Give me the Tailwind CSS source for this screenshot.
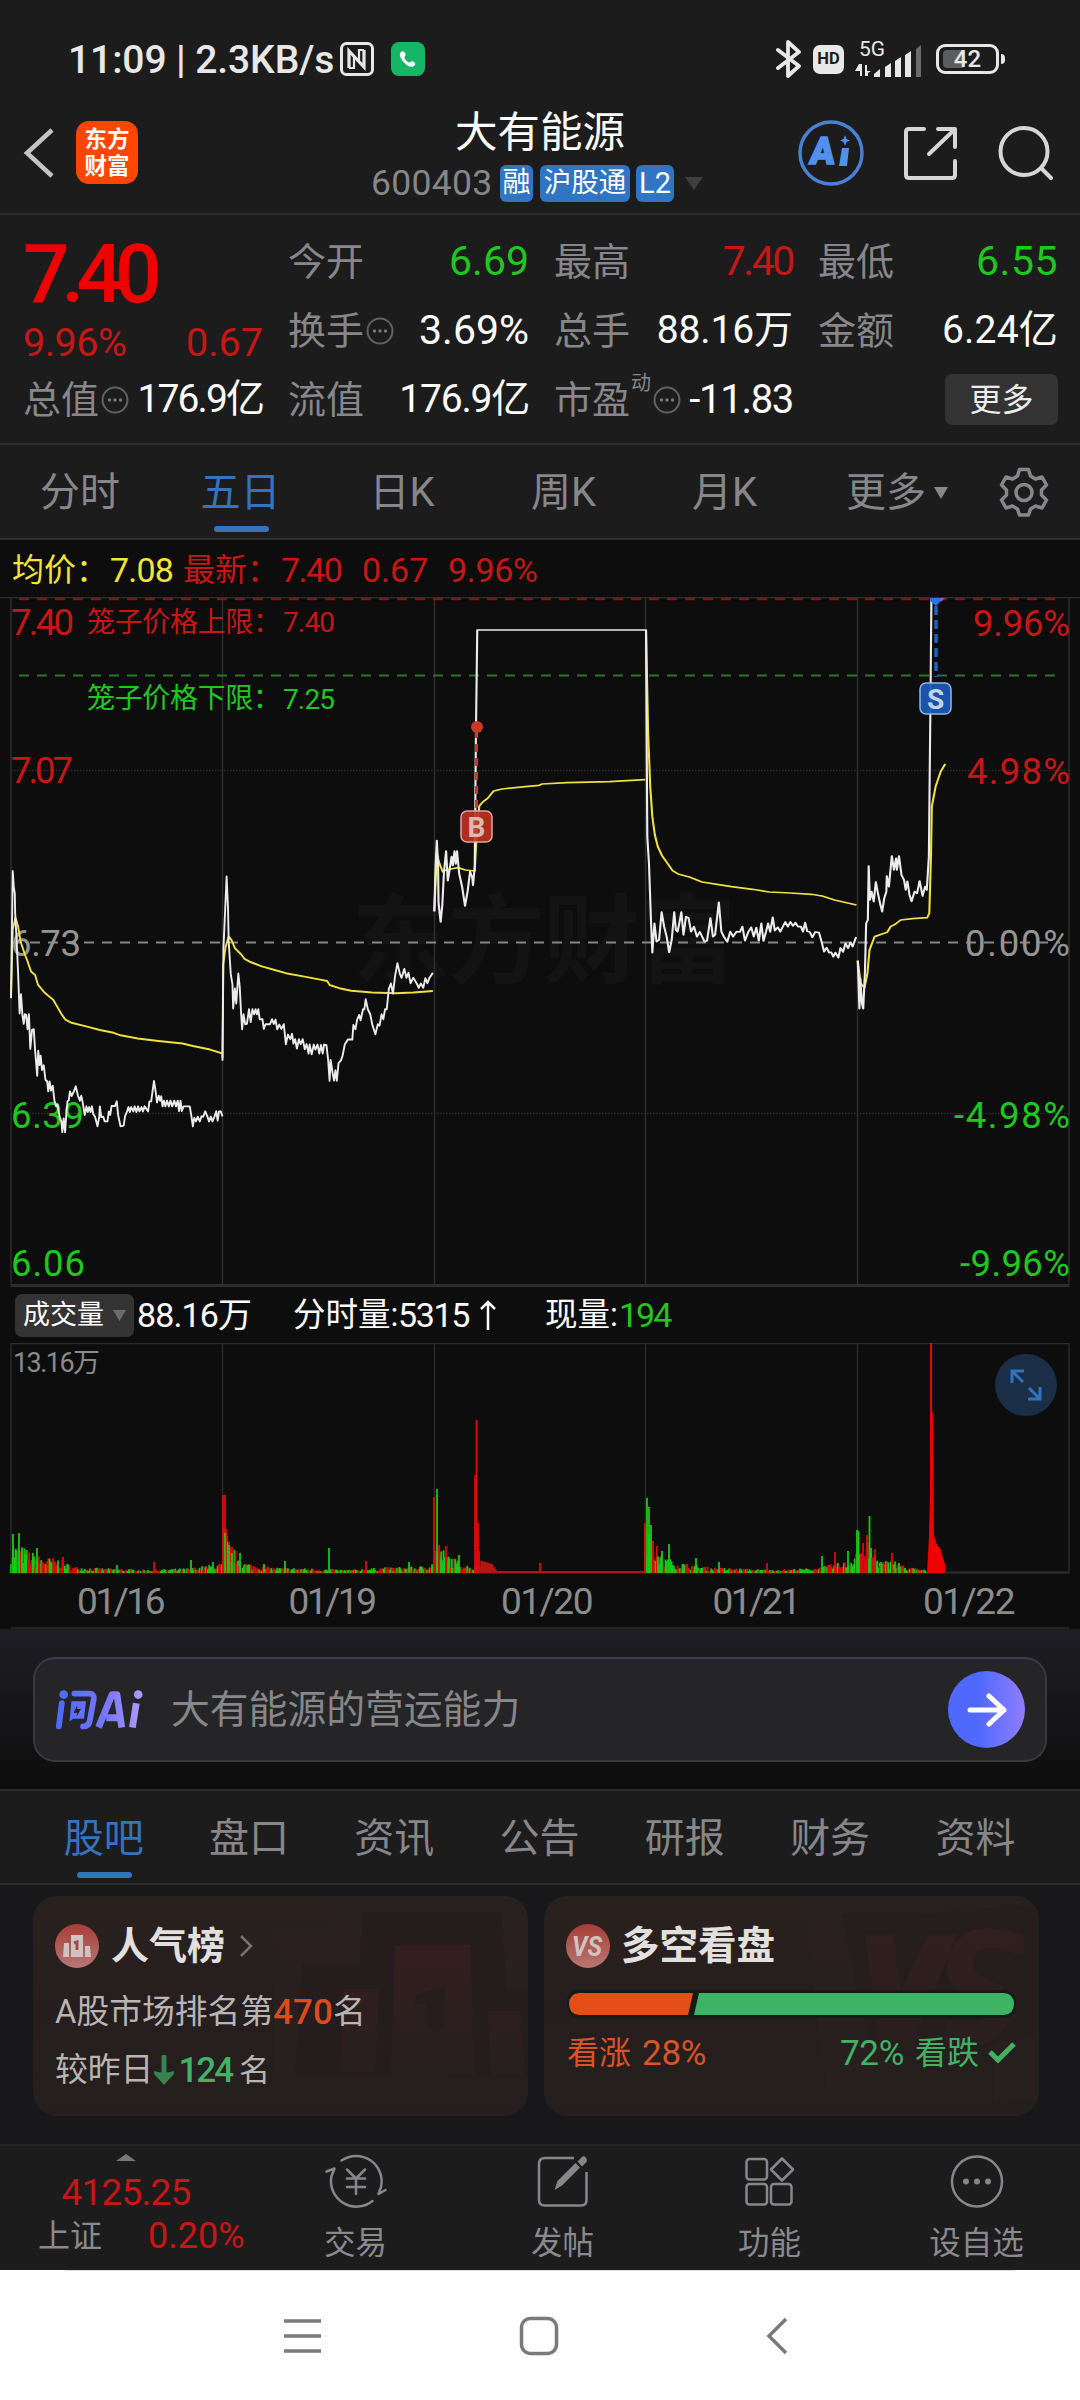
<!DOCTYPE html>
<html lang="zh-CN">
<head>
    <meta charset="UTF-8">
    <title>大有能源 600403</title>
    <script src="https://cdn.jsdelivr.net/npm/@tailwindcss/browser@4"></script>
</head>
<body class="w-[1080px] h-[2400px] overflow-hidden flex flex-col bg-[#0d0d0d] text-white leading-none whitespace-nowrap font-[Roboto,'Noto_Sans_CJK_SC',sans-serif]">

    <!-- status bar -->
    <div class="h-[100px] shrink-0 bg-[#1c1c1c] pt-[18px] pl-[68px] pr-[75px] flex items-center justify-between text-[#e8e8e8]">
        <div class="flex items-center">
            <span class="pt-[2px] text-[39px] w-[272px] tracking-[-0.100px] font-medium">11:09 | 2.3KB/s</span>
            <svg class="w-[34px] h-[34px]" viewBox="0 0 34 34" fill="none" stroke="#e8e8e8">
                <rect x="1.5" y="1.5" width="31" height="31" rx="5" stroke-width="3"/>
                <path d="M9 26V9l15 16V8" stroke-width="3.2"/>
                <path d="M9 26h5V14M24 8h-5v12" stroke-width="2.2"/>
            </svg>
            <svg class="w-[34px] h-[34px] ml-[17px]" viewBox="0 0 34 34">
                <rect width="34" height="34" rx="8" fill="#17b566"/>
                <path d="M10 10c2-2 4 0 4.500 2s-1.500 2.500-1 4 3 4 4.500 4.500 2-1.800 4-1 3 2.500 1.500 4c-3 3-8 0-10.500-3s-6-8-3-10.500z" fill="#fff"/>
            </svg>
        </div>
        <div class="flex items-center">
            <svg class="w-[26px] h-[40px]" viewBox="0 0 26 40" fill="none" stroke="#e8e8e8" stroke-width="3.800" stroke-linecap="round" stroke-linejoin="round">
                <path d="M2 11l21 16-11 10V3l11 10L2 29"/>
            </svg>
            <div class="ml-[11px] w-[31px] h-[29px] rounded-[7px] bg-[#e8e8e8] text-[#1c1c1c] text-[16.500px] font-bold flex items-center justify-center">HD</div>
            <svg class="ml-[11px] w-[68px] h-[38px] overflow-visible" viewBox="0 0 68 38" fill="#e8e8e8">
                <text x="4" y="16" font-size="21" textLength="26" lengthAdjust="spacingAndGlyphs">5G</text>
                <path d="M4 24h3v12H5v-5H0zM10 25h2v6h4l-3 2v3h-3z"/>
                <path d="M19 34l6-5v8h-6zM30 27l6-4v14h-6zM40 21l6-4v20h-6zM50 15l6-4v26h-6z"/>
                <path d="M61 9l5-4v32h-5z" fill="#6b6b6b"/>
            </svg>
            <div class="ml-[13px] relative w-[63px] h-[30px] rounded-[9px] border-3 border-[#e8e8e8] flex items-center justify-center">
                <div class="absolute left-[4px] top-[3px] w-[22px] h-[18px] rounded-[4px] bg-[#5c5c5c]"></div>
                <span class="relative text-[24px] font-medium">42</span>
            </div>
            <div class="ml-[2px] w-[4px] h-[10px] rounded-r-full bg-[#e8e8e8]"></div>
        </div>
    </div>

    <!-- header -->
    <div class="h-[115px] shrink-0 bg-[#1c1c1c] border-b-2 border-[#2c2c2c] flex items-start">
        <svg class="mt-[27px] ml-[23px] w-[32px] h-[52px]" viewBox="0 0 32 52" fill="none" stroke="#c4c4c4" stroke-width="4.500">
            <path d="M29 3L4 26l25 23"/>
        </svg>
        <div class="mt-[21px] ml-[21px] w-[62px] h-[63px] rounded-[13px] bg-[#ff4600] flex flex-col items-center justify-center text-[22.500px] leading-[27px] font-bold">
            <span>东方</span><span>财富</span>
        </div>
        <div class="ml-[233px] w-[335px] flex flex-col">
            <div class="mt-[11px] w-[338px] h-[44px] flex items-center justify-center text-[42.500px]">大有能源</div>
            <div class="mt-[9px] h-[38px] flex items-center">
                <span class="pt-[2px] w-[129px] text-[35.500px] tracking-[0.300px] text-[#87878b]">600403</span>
                <span class="w-[33px] h-[37px] rounded-[6px] bg-[#3074c4] text-[28px] flex items-center justify-center">融</span>
                <span class="ml-[7px] w-[90px] h-[37px] rounded-[6px] bg-[#3074c4] text-[27.500px] flex items-center justify-center">沪股通</span>
                <span class="ml-[6px] w-[38px] h-[37px] rounded-[6px] bg-[#3074c4] text-[29px] flex items-center justify-center">L2</span>
                <svg class="ml-[11px] w-[18px] h-[13px]" viewBox="0 0 18 13"><path d="M0 0h18l-9 13z" fill="#3e3e3e"/></svg>
            </div>
        </div>
        <svg class="mt-[19px] ml-[91px] w-[68px] h-[68px]" viewBox="0 0 68 68">
            <circle cx="34" cy="34" r="31" fill="none" stroke="#4a80d4" stroke-width="3.500"/>
            <text x="12" y="45.500" font-size="38" font-weight="900" fill="#5290f0" stroke="#5290f0" stroke-width="1.500" transform="skewX(-6) translate(4.500 0)" textLength="25" lengthAdjust="spacingAndGlyphs">A</text>
            <path d="M45 29h7l-2 18h-8zM48 16l1.500 4 3.500 1.500-3.500 1.500-1.500 4-1.500-4-3.500-1.500 3.500-1.500z" fill="#5290f0"/>
        </svg>
        <svg class="mt-[26px] ml-[37px] w-[56px] h-[56px]" viewBox="0 0 56 56" fill="none" stroke="#d6d6d6" stroke-width="4" stroke-linecap="round" stroke-linejoin="round">
            <path d="M22 3H7q-3 0-3 3v43q0 3 3 3h43q3 0 3-3V35M27 28L50 6M36 3h17v18"/>
        </svg>
        <svg class="mt-[25px] ml-[39px] w-[58px] h-[58px]" viewBox="0 0 58 58" fill="none" stroke="#d6d6d6" stroke-width="4" stroke-linecap="round">
            <circle cx="27" cy="26.500" r="23.500"/><path d="M44 43l10 10"/>
        </svg>
    </div>

    <!-- quote -->
    <div class="h-[230px] shrink-0 bg-[#1c1c1c] border-b-2 border-[#2c2c2c] pt-[12px] pl-[23px] flex gap-[25px] text-[38px]">
        <div class="w-[240px]">
            <div class="h-[93px] flex items-center text-[82px] font-medium text-[#f00000] tracking-[-8px]">7.40</div>
            <div class="h-[45px] flex items-center justify-between text-[39.500px] text-[#c81616]"><span class="tracking-[-0.500px]">9.96%</span><span>0.67</span></div>
            <div class="h-[69px] flex items-center">
                <span class="text-[#87878b]">总值</span>
                <svg class="ml-[2px] w-[28px] h-[28px]" viewBox="0 0 28 28"><circle cx="14" cy="14" r="12.500" fill="none" stroke="#626265" stroke-width="2"/><g fill="#77777a"><circle cx="8.500" cy="14" r="1.700"/><circle cx="14" cy="14" r="1.700"/><circle cx="19.500" cy="14" r="1.700"/></g></svg>
                <span class="ml-auto text-[39px] tracking-[-1.900px]">176.9亿</span>
            </div>
        </div>
        <div class="w-[241px]">
            <div class="h-[69px] flex items-center justify-between"><span class="text-[#87878b]">今开</span><span class="text-[#1fc81f] text-[41px]">6.69</span></div>
            <div class="h-[69px] flex items-center">
                <span class="text-[#87878b]">换手</span>
                <svg class="ml-[2px] w-[28px] h-[28px]" viewBox="0 0 28 28"><circle cx="14" cy="14" r="12.500" fill="none" stroke="#626265" stroke-width="2"/><g fill="#77777a"><circle cx="8.500" cy="14" r="1.700"/><circle cx="14" cy="14" r="1.700"/><circle cx="19.500" cy="14" r="1.700"/></g></svg>
                <span class="ml-auto text-[41px]">3.69%</span>
            </div>
            <div class="h-[69px] flex items-center justify-between"><span class="text-[#87878b]">流值</span><span class="text-[39px] tracking-[-1.200px]">176.9亿</span></div>
        </div>
        <div class="w-[239px]">
            <div class="h-[69px] flex items-center justify-between"><span class="text-[#87878b]">最高</span><span class="text-[#c81616] text-[41px] tracking-[-2.400px]">7.40</span></div>
            <div class="h-[69px] flex items-center justify-between"><span class="text-[#87878b]">总手</span><span class="text-[39px] tracking-[-0.100px]">88.16万</span></div>
            <div class="h-[69px] flex items-center">
                <span class="text-[#87878b]">市盈</span>
                <span class="text-[#87878b] text-[20px] mb-[34px] ml-[1px]">动</span>
                <svg class="ml-[2px] w-[28px] h-[28px]" viewBox="0 0 28 28"><circle cx="14" cy="14" r="12.500" fill="none" stroke="#626265" stroke-width="2"/><g fill="#77777a"><circle cx="8.500" cy="14" r="1.700"/><circle cx="14" cy="14" r="1.700"/><circle cx="19.500" cy="14" r="1.700"/></g></svg>
                <span class="ml-auto text-[40px] tracking-[-1.300px]">-11.83</span>
            </div>
        </div>
        <div class="w-[240px]">
            <div class="h-[69px] flex items-center justify-between"><span class="text-[#87878b]">最低</span><span class="text-[#1fc81f] text-[41px] tracking-[0.500px]">6.55</span></div>
            <div class="h-[69px] flex items-center justify-between"><span class="text-[#87878b]">金额</span><span class="text-[39px] tracking-[0.200px]">6.24亿</span></div>
            <div class="h-[69px] flex items-center justify-end"><span class="w-[113px] h-[51px] rounded-[7px] bg-[#333333] text-[32px] text-[#ececec] flex items-center justify-center">更多</span></div>
        </div>
    </div>

    <!-- period tabs -->
    <div class="h-[95px] shrink-0 bg-[#1c1c1c] border-b-2 border-[#2c2c2c] flex text-[40px] text-[#87878b]">
        <span class="w-[160px] h-[94px] pt-[2px] flex items-center justify-center">分时</span>
        <span class="w-[161px] h-[94px] pt-[2px] flex items-center justify-center relative text-[#3474bc]">五日<i class="absolute bottom-[7px] left-[54px] w-[55px] h-[6px] rounded-full bg-[#3474bc]"></i></span>
        <span class="w-[162px] h-[94px] pt-[2px] flex items-center justify-center">日K</span>
        <span class="w-[161px] h-[94px] pt-[2px] flex items-center justify-center">周K</span>
        <span class="w-[161px] h-[94px] pt-[2px] flex items-center justify-center">月K</span>
        <span class="w-[184px] h-[94px] pt-[2px] flex items-center justify-center">更多<svg class="ml-[8px] w-[14px] h-[12px]" viewBox="0 0 14 12"><path d="M0 0h14L7 12z" fill="#87878b"/></svg></span>
        <span class="w-[69px] h-[94px] flex items-center justify-center">
            <svg class="w-[50px] h-[50px]" viewBox="0 0 50 50" fill="none" stroke="#87878b" stroke-width="3.500" stroke-linejoin="round">
                <path d="M20.500 2.500h9l2 6.500 5 3 6.500-2 4.500 8-5 5v5l5 5-4.500 8-6.500-2-5 3-2 6h-9l-2-6-5-3-6.500 2-4.500-8 5-5v-5l-5-5 4.500-8 6.500 2 5-3z"/>
                <circle cx="25" cy="25.500" r="8"/>
            </svg>
        </span>
    </div>

    <div class="h-[57px] shrink-0 pt-[2px] pl-[12px] flex items-center text-[32px] text-[#c81616]">
        <span class="w-[98px] text-[#f4e436]">均价：</span><span class="w-[73px] text-[34px] tracking-[-0.800px] text-[#f4e436]">7.08</span>
        <span class="w-[98px]">最新：</span><span class="w-[81px] text-[34px] tracking-[-1.500px]">7.40</span><span class="w-[86px] text-[34px]">0.67</span><span class="text-[34px] tracking-[-0.300px]">9.96%</span>
    </div>

    <!-- five day price chart -->
    <svg class="w-[1080px] h-[690px] shrink-0" viewBox="0 597 1080 690" fill="none">
        <g fill="#131313" font-size="97" font-weight="700"><text x="352" y="975" textLength="384">东方财富</text></g>
        <g stroke="#2e2e2e" stroke-width="1.500">
            <path d="M0 597.500H1080M11 597V1285M222.500 597V1285M434.500 597V1285M645.500 597V1285M857.500 597V1285M1069 597V1285"/>
            <path d="M11 770.500H1069M11 1113.500H1069" stroke-dasharray="1.500 1.500"/>
            <path d="M11 1285.500H1069" stroke-width="3"/>
        </g>
        <path d="M19 599H1060" stroke="#7a1717" stroke-width="2.500" stroke-dasharray="10 8"/>
        <path d="M19 675.500H1060" stroke="#2a752a" stroke-width="2" stroke-dasharray="10 8"/>
        <path d="M12 942.500H1060" stroke="#858585" stroke-width="2" stroke-dasharray="10 8" stroke-dashoffset="-18"/>

        <g font-size="36.500">
            <g fill="#c81616"><text x="11" y="635" textLength="63">7.40</text><text x="11" y="783" textLength="62">7.07</text></g>
            <text x="11" y="956" textLength="70" fill="#959595">6.73</text>
            <g fill="#1fc81f"><text x="11" y="1128" textLength="73">6.39</text><text x="11" y="1276" textLength="74">6.06</text></g>
            <g text-anchor="end">
                <g fill="#c81616"><text x="1070" y="636" textLength="97">9.96%</text><text x="1070" y="784" textLength="103">4.98%</text></g>
                <text x="1070" y="956" textLength="105" fill="#959595">0.00%</text>
                <g fill="#1fc81f"><text x="1070" y="1128" textLength="116">-4.98%</text><text x="1070" y="1276" textLength="110">-9.96%</text></g>
            </g>
        </g>
        <g font-size="28">
            <g fill="#c81616"><text x="87" y="632" textLength="194">笼子价格上限：</text><text x="283" y="632" textLength="52">7.40</text></g>
            <g fill="#1fc81f"><text x="87" y="708" textLength="194">笼子价格下限：</text><text x="283" y="709" textLength="52">7.25</text></g>
        </g>

        <!-- 01/16, 01/19 -->
        <g transform="translate(0 590) scale(.3444 .3571)" stroke-width="5.500" stroke-linejoin="round">
            <path stroke="#f0e040" d="M32 1140L37 950 45 918 52 940 60 985 72 1020 80 1040 90 1068 102 1078 110 1105 130 1128 155 1148 165 1165 180 1190 190 1203 205 1211 250 1222 290 1232 330 1240 350 1247 400 1256 460 1263 530 1270 560 1277 610 1287 646 1298M646 1310L648 1050 655 1000 664 970 672 980 682 1003 700 1020 710 1033 725 1041 760 1054 800 1065 830 1073 880 1082 930 1091 950 1095 957 1106 985 1115 1020 1122 1080 1127 1150 1129 1200 1127 1257 1123"/>
            <path stroke="#ececec" d="M32 1143L37 787 40 832 43 850 44 905 48 975 52 1060 57 1186 61 1132 65 1190 69 1215 72 1188 76 1190 80 1230 84 1188 88 1285 93 1232 98 1230 102 1290 108 1360 111 1290 115 1330 118 1304 122 1344 127 1331 132 1372 137 1376 140 1404 144 1376 148 1402 153 1388 158 1430 163 1446 167 1440 173 1475 178 1488 181 1518 185 1480 189 1518 192 1475 196 1432 200 1428 203 1404 208 1417 214 1405 220 1390 226 1415 232 1430 236 1416 240 1435 246 1470 251 1446 255 1462 259 1448 263 1462 267 1446 271 1468 276 1475 283 1502 288 1476 290 1446 294 1476 300 1475 304 1488 312 1488 316 1460 320 1470 324 1445 334 1445 339 1432 343 1470 350 1502 359 1500 363 1474 369 1460 373 1448 377 1462 381 1448 387 1460 391 1446 396 1462 401 1446 405 1460 411 1448 415 1460 420 1446 430 1460 434 1432 439 1432 447 1375 452 1405 456 1435 461 1416 465 1430 468 1418 472 1446 476 1430 480 1446 485 1430 490 1446 495 1430 500 1446 506 1430 511 1446 516 1430 520 1459 524 1430 528 1459 533 1446 551 1446 556 1475 560 1502 564 1478 569 1488 574 1475 580 1488 585 1474 590 1475 596 1460 602 1474 607 1488 612 1475 617 1488 623 1474 628 1460 632 1486 636 1460 641 1460 646 1474M646 1318L649 1000 652 935 658 802 662 890 664 985 670 1075 675 1105 677 1172 682 1116 686 1158 692 1074 696 1110 700 1185 703 1230 707 1188 712 1216 717 1215 723 1174 728 1210 733 1174 738 1188 742 1174 746 1188 750 1174 754 1202 762 1202 766 1229 771 1216 784 1216 790 1202 795 1215 800 1203 805 1230 811 1217 817 1229 824 1216 830 1272 836 1245 843 1258 848 1243 852 1270 857 1258 862 1284 868 1258 873 1272 879 1258 885 1286 890 1272 896 1298 899 1273 905 1300 911 1273 916 1287 922 1273 927 1298 932 1274 937 1298 941 1273 948 1275 953 1318 957 1374 960 1316 966 1354 970 1374 974 1345 978 1374 983 1325 990 1317 995 1303 1001 1273 1010 1259 1023 1259 1026 1218 1032 1230 1037 1203 1043 1190 1047 1205 1054 1174 1058 1174 1062 1146 1068 1174 1075 1188 1081 1217 1090 1244 1097 1216 1102 1220 1108 1188 1113 1202 1118 1174 1123 1174 1129 1117 1135 1102 1141 1130 1147 1082 1154 1045 1161 1075 1166 1086 1174 1061 1180 1086 1186 1072 1192 1101 1200 1086 1210 1102 1216 1114 1222 1102 1229 1114 1235 1087 1241 1101 1247 1086 1257 1072"/>
        </g>
        <!-- 01/20, 01/21, 01/22 -->
        <g transform="translate(420 590) scale(.4209 .3333)" stroke-width="5" stroke-linejoin="round">
            <path stroke="#f0e040" d="M34 965L40 790 46 820 54 845 62 840 90 833 108 840 130 843 136 700 141 648 150 635 160 626 175 603 195 597 250 590 283 586 290 582 350 578 450 575 535 569M537 120L542 430 547 590 552 680 558 735 565 770 575 797 588 820 600 842 615 853 640 861 670 876 710 884 740 890 790 898 830 906 880 909 930 913 955 918 985 930 1037 945M1040 1112L1047 1180 1056 1194 1063 1150 1068 1080 1080 1040 1110 1027 1118 1010 1130 1002 1142 990 1170 986 1205 983 1210 970 1214 800 1216 650 1225 590 1237 545 1248 522"/>
            <path stroke="#ececec" d="M34 963L37 830 40 752 43 830 44 938 49 996 53 945 57 845 62 783 66 872 70 842 75 800 78 826 82 783 85 822 88 783 93 850 100 890 107 948 113 905 119 845 124 862 126 886 130 830 133 420 136 120H537L540 740 544 820 549 1000 552 1088 557 1000 562 1055 568 1050 574 966 580 1010 586 1040 592 1087 598 1050 604 966 608 1020 612 1025 616 1000 621 966 626 1035 632 980 638 984 644 1025 651 1010 658 1040 665 1026 671 1042 676 1055 682 1052 690 984 696 1040 701 1035 710 937 716 1025 722 1040 730 1056 737 1025 744 1040 752 1025 760 1026 766 1010 772 1052 780 1026 787 1012 793 1040 799 1013 805 1052 811 1000 816 1053 822 1026 827 1000 832 1026 838 982 843 1022 850 1012 856 1025 862 1010 868 996 874 1010 880 996 886 1008 892 998 898 1010 905 1010 910 1025 915 998 920 1024 926 1026 932 1042 939 1026 948 1028 954 1055 960 1085 966 1073 972 1088 977 1087 982 1100 987 1088 994 1103 999 1074 1005 1086 1011 1060 1017 1075 1023 1057 1028 1070 1036 1041M1040 1112L1044 1256 1046 1165 1050 1240 1053 1256 1057 1150 1060 1000 1064 990 1066 828 1069 930 1073 905 1078 935 1083 876 1088 910 1093 940 1098 965 1103 925 1108 905 1109 858 1114 890 1121 798 1126 840 1131 805 1133 840 1138 798 1144 855 1150 870 1154 900 1158 874 1163 915 1168 934 1175 905 1181 910 1187 873 1194 918 1200 890 1204 900 1209 800 1213 310 1215 25"/>
        </g>

        <path d="M476.500 730V808" stroke="#c93a26" stroke-width="3" stroke-dasharray="8 6"/>
        <circle cx="477" cy="727" r="6" fill="#c93a26"/>
        <rect x="461" y="811" width="31" height="31" rx="6" fill="#bd3222" fill-opacity=".9" stroke="#dfa69d" stroke-width="1.500"/>
        <text x="476.500" y="836.500" font-size="28" font-weight="700" text-anchor="middle" fill="#dfb8b3">B</text>
        <path d="M936 606V677" stroke="#1f60bf" stroke-width="3.500" stroke-dasharray="9 5"/>
        <path d="M930 598h11v3l-5 5-6-5z" fill="#2874e8"/><path d="M941 598h4l-4 4z" fill="#b0527d"/>
        <rect x="920" y="683" width="31" height="31" rx="6" fill="#1a59b3" fill-opacity=".95" stroke="#94b5df" stroke-width="1.500"/>
        <text x="935.500" y="708.500" font-size="28" font-weight="700" text-anchor="middle" fill="#c4d2e6">S</text>
    </svg>

    <div class="h-[56px] shrink-0 pl-[15px] flex items-center text-[33px]">
        <span class="w-[119px] h-[43px] rounded-[7px] bg-[#333333] pl-[8px] text-[27px] flex items-center">成交量<svg class="ml-[9px] w-[13px] h-[11px]" viewBox="0 0 13 11"><path d="M0 0h13L6.500 11z" fill="#6c6c6c"/></svg></span>
        <span class="ml-[3px] w-[156px] text-[34px] tracking-[-0.900px]">88.16万</span>
        <span class="w-[105px] text-[32.500px]">分时量:</span><span class="w-[82px] text-[34px] tracking-[-1.400px]">5315</span>
        <svg class="w-[16px] h-[30px]" viewBox="0 0 16 30" fill="none" stroke="#fff" stroke-width="2.500"><path d="M8 30V2M1 9l7-7 7 7"/></svg>
        <span class="ml-[49px] w-[74px] text-[32.500px]">现量:</span><span class="text-[#1fc81f] text-[34px] tracking-[-2px]">194</span>
    </div>

    <!-- volume -->
    <div class="h-[231px] shrink-0 relative">
        <svg id="volume" class="w-[1080px] h-[231px]" viewBox="0 1343 1080 231" fill="none">
            <path d="M11 1343.500H1069M11 1343V1573M222.500 1343V1573M434.500 1343V1573M645.500 1343V1573M857.500 1343V1573M1069 1343V1573" stroke="#2a2a2a" stroke-width="1.500"/>
            <path d="M11 1572.500H1069" stroke="#2a2a2a" stroke-width="2.500"/>
            <text x="13" y="1371.500" font-size="27" textLength="87" fill="#8a8a8a">13.16万</text>
        </svg>
        <div class="absolute left-[995px] top-[11px] w-[62px] h-[62px] rounded-full bg-[#1a2e47] flex items-center justify-center">
            <svg class="w-[34px] h-[34px]" viewBox="0 0 34 34" fill="none" stroke="#2f72bd" stroke-width="3"><path d="M3 15V3h12M3.500 3.500L14 14M19 31h12V19M30.500 30.500L20 20"/></svg>
        </div>
    </div>
    <div class="h-[55px] shrink-0 mx-[11px] pt-[2px] border-b-2 border-[#242424] flex items-center text-[37px] tracking-[-2.500px] text-[#8c8c8c]">
        <span class="w-[211.500px] pl-[66px]">01/16</span><span class="w-[211.500px] pl-[66px]">01/19</span><span class="w-[211.500px] pl-[67px] tracking-[-1.500px]">01/20</span><span class="w-[211.500px] pl-[67px]">01/21</span><span class="pl-[66px] tracking-[-1.500px]">01/22</span>
    </div>

    <!-- ask AI -->
    <div class="h-[160px] shrink-0 bg-linear-to-b from-[#1f1e24] to-[#0d0d0d] pt-[28px] px-[33px]">
        <div class="h-[105px] rounded-[22px] border-2 border-[#3a3a3e] border-t-[#3b3b57] bg-[#252527] flex items-center pl-[20px] pr-[20px]">
            <svg class="w-[89px] h-[42px]" viewBox="0 0 92 42">
                <defs><linearGradient id="ai" x1="0" x2="92" y1="0" y2="0" gradientUnits="userSpaceOnUse"><stop stop-color="#4a69ff"/><stop offset=".6" stop-color="#7a78ff"/><stop offset="1" stop-color="#b59aff"/></linearGradient></defs>
                <g fill="none" stroke="url(#ai)" stroke-width="6" stroke-linecap="round" stroke-linejoin="round">
                    <path d="M7 14L4 38M20 4h15q6 0 5 6l-4 22q-1 6-7 6"/>
                    <path d="M84 14l-4 25M45 39L59 5h5l5 34M53 29h12" stroke-width="7" stroke-linecap="butt"/>
                </g>
                <circle cx="9" cy="5" r="4.500" fill="url(#ai)"/><circle cx="86" cy="5" r="4.500" fill="url(#ai)"/>
                <path d="M17 12h15l-2 18H19l-4 3zM23 16l-4 8h4l-1 4 5-8h-4z" fill="url(#ai)" fill-rule="evenodd"/>
            </svg>
            <span class="ml-[27px] pt-[1px] text-[38.800px] text-[#87878a]">大有能源的营运能力</span>
            <div class="ml-auto w-[77px] h-[77px] rounded-full bg-linear-to-r from-[#4f69ff] from-40% to-[#8f7dff] flex items-center justify-center">
                <svg class="w-[40px] h-[36px]" viewBox="0 0 40 36" fill="none" stroke="#fff" stroke-width="5" stroke-linecap="round" stroke-linejoin="round"><path d="M3 18h34M22 4l15 14-15 14"/></svg>
            </div>
        </div>
    </div>

    <!-- content tabs -->
    <div class="h-[96px] shrink-0 bg-[#1c1c1c] border-y-2 border-[#2c2c2c] pl-[31px] flex text-[40px] text-[#87878b]">
        <span class="w-[145.300px] h-[94px] pt-[2px] flex items-center justify-center relative text-[#3474bc]">股吧<i class="absolute bottom-[7px] left-[46px] w-[55px] h-[6px] rounded-full bg-[#3474bc]"></i></span>
        <span class="w-[145.300px] h-[94px] pt-[2px] flex items-center justify-center">盘口</span>
        <span class="w-[145.300px] h-[94px] pt-[2px] flex items-center justify-center">资讯</span>
        <span class="w-[145.300px] h-[94px] pt-[2px] flex items-center justify-center">公告</span>
        <span class="w-[145.300px] h-[94px] pt-[2px] flex items-center justify-center">研报</span>
        <span class="w-[145.300px] h-[94px] pt-[2px] flex items-center justify-center">财务</span>
        <span class="w-[145.300px] h-[94px] pt-[2px] flex items-center justify-center">资料</span>
    </div>

    <div class="h-[259px] shrink-0 bg-[#18181a] pt-[11px] pl-[33px] flex gap-[16px] text-[32.800px] text-[#b9b5b4]">
        <div class="w-[495px] h-[220px] relative rounded-[24px] overflow-hidden bg-linear-to-b from-[#2a211f] via-[#261e1e] to-[#241f1e]">
            <svg class="absolute inset-0 w-[495px] h-[220px]" viewBox="0 0 495 220">
                <defs><linearGradient id="fade" x1="0" x2="0" y1="40" y2="182" gradientUnits="userSpaceOnUse"><stop stop-color="#351f20"/><stop offset="1" stop-color="#271f1e"/></linearGradient></defs>
                <path d="M241 177V36h54V0h200v180z" fill="#2a211f" opacity=".6"/>
                <path d="M262 178l7-109h58l3-53h138l6 78h21v86z" fill="#251d1d"/>
                <path d="M307 176l4-83h35l-4 83zM358 179l4-130h75l5 130zM458 179l-3-64h32l5 64z" fill="url(#fade)"/>
                <path d="M382 98l30-7v42h-19v-26l-11 2z" fill="#271d1d"/>
            </svg>
            <div class="relative pl-[22px] pt-[21px]">
                <div class="h-[58px] flex items-center text-[38px] font-bold text-[#e2e0df]">
                    <svg class="w-[44px] h-[44px]" viewBox="0 0 44 44">
                        <defs><linearGradient id="red" x1="0" x2="0" y1="0" y2="1"><stop stop-color="#a83d38"/><stop offset="1" stop-color="#b77772"/></linearGradient></defs>
                        <circle cx="22" cy="22" r="22" fill="url(#red)"/>
                        <path d="M9 19h5v14H8zM16 11h12v22H16zM30 22h5l1 11h-6z" fill="#cfc3c1"/><path d="M19 19l3-1v8" fill="none" stroke="#a04a46" stroke-width="3"/>
                    </svg>
                    <span class="ml-[12px]">人气榜</span>
                    <svg class="ml-[14px] w-[14px] h-[22px]" viewBox="0 0 14 22" fill="none" stroke="#77706f" stroke-width="2.500"><path d="M2 1l10 10L2 21"/></svg>
                </div>
                <div class="h-[74px] flex items-center">A股市场排名第<span class="text-[35px] font-medium text-[#dc4a20]">470</span>名</div>
                <div class="h-[42px] flex items-center">较昨日<svg class="w-[22px] h-[30px]" viewBox="0 0 22 30"><path d="M11 2v18" stroke="#36834f" stroke-width="5" stroke-linecap="round"/><path d="M1 16q10 3 20 0 1 2-1 4l-9 10-9-10q-2-2-1-4z" fill="#36834f"/></svg><span class="ml-[3px] text-[35px] font-medium tracking-[-2px] text-[#43b164]">124</span><span class="ml-[7px] text-[31px]">名</span></div>
            </div>
        </div>
        <div class="w-[495px] h-[220px] relative rounded-[24px] overflow-hidden bg-linear-to-b from-[#2a211f] via-[#261e1e] to-[#241f1e]">
            <svg class="absolute inset-0 w-[495px] h-[220px]" viewBox="0 0 495 220">
                <path d="M257 0h238v200l-45 5V140l-90-10-43 59-34 5z" fill="#2a221f" opacity=".6"/>
                <path d="M297 18h80l118-10v130l-90 20-80-10z" fill="#261e1d"/>
                <path d="M321 39h28l8 56 27-56h28l-46 116h-30zM478 60q-46-20-50 8 0 10 25 20 20 12 10 40-20 32-62 16l3-20q34 12 38-8 0-8-22-18-24-12-14-42 18-38 74-16z" fill="url(#fade)" opacity=".8"/>
            </svg>
            <div class="relative px-[23px] pt-[21px]">
                <div class="h-[58px] flex items-center text-[38.500px] font-bold text-[#e2e0df]">
                    <svg class="ml-[-1px] w-[44px] h-[44px]" viewBox="0 0 44 44">
                        <circle cx="22" cy="22" r="22" fill="url(#red)"/>
                        <text x="6" y="32" font-size="28" font-weight="700" font-style="italic" fill="#cfc3c1" textLength="30" lengthAdjust="spacingAndGlyphs">VS</text>
                    </svg>
                    <span class="ml-[11px]">多空看盘</span>
                </div>
                <svg class="mt-[15px] w-[449px] h-[28px]" viewBox="0 0 449 28">
                    <rect x="0" y="0" width="449" height="28" rx="12" fill="#141c17"/>
                    <path d="M12 3h114l-5 22H12Q2 24 2 14T12 3z" fill="#e34f17"/><path d="M132 3h305q10 1 10 11t-10 11H127z" fill="#3eb265"/>
                </svg>
                <div class="mt-[11px] h-[48px] flex items-center text-[32px] text-[#d8532a]">
                    <span>看涨</span><span class="ml-[11px] text-[35px] tracking-[-0.300px]">28%</span>
                    <span class="ml-auto text-[35px] tracking-[-0.300px] text-[#43b164]">72%</span><span class="ml-[11px] text-[#43b164]">看跌</span>
                    <svg class="ml-[9px] w-[28px] h-[22px]" viewBox="0 0 28 22" fill="none" stroke="#43b164" stroke-width="5"><path d="M2 10l8 8L26 2"/></svg>
                </div>
            </div>
        </div>
    </div>

    <!-- bottom bar -->
    <div class="h-[126px] shrink-0 bg-[#1c1c1c] border-t-2 border-[#262628] flex text-[31.500px] text-[#8a8a8e]">
        <div class="w-[252px] flex flex-col items-center">
            <svg class="mt-[8px] w-[20px] h-[7px]" viewBox="0 0 20 7"><path d="M0 7L10 0l10 7z" fill="#77777a"/></svg>
            <span class="mt-[12px] h-[38px] flex items-center text-[37px] tracking-[-0.800px] text-[#c81616]">4125.25</span>
            <div class="mt-[6px] h-[38px] w-[252px] pl-[38px] flex items-center text-[32px]">上证<span class="ml-[46px] text-[36px] text-[#c81616]">0.20%</span></div>
        </div>
        <div class="w-[207px] pt-[8px] flex flex-col items-center">
            <svg class="w-[64px] h-[56px]" viewBox="0 0 64 56" fill="none" stroke="#87878b" stroke-width="2.500" stroke-linecap="round" stroke-linejoin="round">
                <path d="M17.500 6.500A25.500 25.500 0 0 1 57 33l-2.500 7 7-4M48.500 47A25.500 25.500 0 0 1 7.500 22l3-7.500-8 3"/>
                <path d="M23 15.500l9 9 9-9M23 24.500h18M23 33h18M32 24.500V40"/>
            </svg>
            <span class="mt-[18px]">交易</span>
        </div>
        <div class="w-[207px] pt-[8px] flex flex-col items-center">
            <svg class="w-[56px] h-[56px]" viewBox="0 0 56 56" fill="none" stroke="#87878b" stroke-width="2.500">
                <path d="M39 4H10Q4 4 4 10v36q0 5.500 6 5.500h36q5.500 0 5.500-5.500V18"/>
                <path d="M19.500 36l3-9 18-18 4.500 4.500-18 18zM42.500 7.500l5-5q2-1 4 2 1 2 0 3.500l-4.500 4.500z" fill="#87878b" stroke="none"/>
            </svg>
            <span class="mt-[18px]">发帖</span>
        </div>
        <div class="w-[207px] pt-[8px] flex flex-col items-center">
            <svg class="w-[56px] h-[56px]" viewBox="0 0 56 56" fill="none" stroke="#87878b" stroke-width="2.500" stroke-linejoin="round">
                <rect x="4.500" y="5" width="20.500" height="20.500" rx="3"/><rect x="4.500" y="30" width="20.500" height="20.500" rx="3"/><rect x="29" y="30" width="20.500" height="20.500" rx="3"/>
                <path d="M40 4.500l11 11-11 11L29 15.500z"/>
            </svg>
            <span class="mt-[18px]">功能</span>
        </div>
        <div class="w-[207px] pt-[8px] flex flex-col items-center">
            <svg class="w-[56px] h-[56px]" viewBox="0 0 56 56" fill="#87878b">
                <circle cx="28" cy="27.500" r="25" fill="none" stroke="#87878b" stroke-width="2.500"/>
                <circle cx="17" cy="27.500" r="3"/><circle cx="28" cy="27.500" r="3"/><circle cx="39" cy="27.500" r="3"/>
            </svg>
            <span class="mt-[18px]">设自选</span>
        </div>
    </div>

    <!-- system navigation -->
    <div class="h-[130px] shrink-0 bg-white px-[66px]">
        <div class="h-px bg-[#dedede]"></div>
        <div class="h-[129px] flex items-center pl-[217px] text-[#7a7a7a]">
            <svg class="w-[40px] h-[40px]" viewBox="0 0 40 40" fill="none" stroke="#7a7a7a" stroke-width="3.500"><path d="M1 5h37M1 20h37M1 35h37"/></svg>
            <svg class="ml-[196px] w-[40px] h-[40px]" viewBox="0 0 40 40" fill="none" stroke="#7a7a7a" stroke-width="3.500"><rect x="2.500" y="2.500" width="35" height="35" rx="9"/></svg>
            <svg class="ml-[207px] w-[22px] h-[40px]" viewBox="0 0 22 40" fill="none" stroke="#7a7a7a" stroke-width="3.500"><path d="M20 3L3 20l17 17"/></svg>
        </div>
    </div>

    <script>
        const svg = document.getElementById('volume');
        const R = '#dc0a0a', G = '#18c818';
        let seed = 7;
        const rnd = () => (seed = (seed * 16807) % 2147483647) / 2147483647;

        // x, height of the envelope between two neighbours
        const envelope = [
            [11, 36], [22, 32], [40, 20], [60, 17], [72, 8], [100, 6], [150, 4], [190, 6], [222, 12],
            [223, 60], [232, 32], [245, 13], [270, 7], [350, 4], [385, 7], [420, 8], [433, 13],
            [434, 40], [447, 24], [460, 13], [474, 7], [480, 14], [492, 10], [497, 2], [644, 2],
            [645, 70], [652, 44], [662, 20], [680, 13], [710, 7], [770, 4], [815, 6], [850, 15],
            [857, 36], [870, 36], [880, 15], [895, 15], [905, 8], [926, 4]
        ];
        const spikes = [
            [13, 39, G], [19, 40, G], [22, 22, G], [37, 25, G], [63, 16, R], [117, 8, G], [154, 11, R], [191, 13, G], [213, 11, G],
            [223, 78, R], [225, 78, R], [226, 44, R], [225, 40, G], [229, 28, G], [232, 20, G], [240, 20, G], [264, 9, G], [285, 12, G], [329, 25, G], [366, 12, R], [409, 11, G],
            [434, 76, R], [437, 84, G], [439, 28, R], [446, 27, R], [459, 18, G],
            [475, 98, R], [476.5, 153, R], [478, 50, R], [479, 22, R], [540, 10, R],
            [645, 50, R], [647, 75, G], [649, 66, G], [651, 48, G], [653, 32, R], [662, 22, G], [669, 29, G], [696, 15, G], [719, 11, G], [767, 10, R], [822, 17, G], [835, 21, R], [848, 22, G],
            [857, 43, G], [858.5, 42, G], [867, 38, R], [869.5, 57, G], [875, 24, R], [892, 20, R], [899, 10, G]
        ];
        function bar(x, h, color) {
            const r = document.createElementNS('http://www.w3.org/2000/svg', 'rect');
            r.setAttribute('x', x - .9);
            r.setAttribute('y', 1573 - h);
            r.setAttribute('width', 1.8);
            r.setAttribute('height', h);
            r.setAttribute('fill', color);
            svg.appendChild(r);
        }
        for (let i = 0; i < envelope.length - 1; i++) {
            const [x0, h0] = envelope[i], [x1, h1] = envelope[i + 1];
            for (let x = x0; x < x1; x += 1.2) {
                const top = h0 + (h1 - h0) * (x - x0) / (x1 - x0);
                const locked = x > 480 && x < 645;
                bar(x, Math.max(2, locked ? top * .9 : top * (.25 + .6 * rnd())), locked ? '#b81414' : rnd() < .5 ? R : G);
            }
        }
        spikes.forEach(s => bar(...s));
        const last = document.createElementNS('http://www.w3.org/2000/svg', 'path');
        last.setAttribute('d', 'M927 1573L929 1536 930 1495 930 1343H932L932 1412 933 1413 934 1535 936 1543 941 1550 943 1558 945 1564V1573z');
        last.setAttribute('fill', '#f00000');
        svg.appendChild(last);
    </script>
</body>
</html>
